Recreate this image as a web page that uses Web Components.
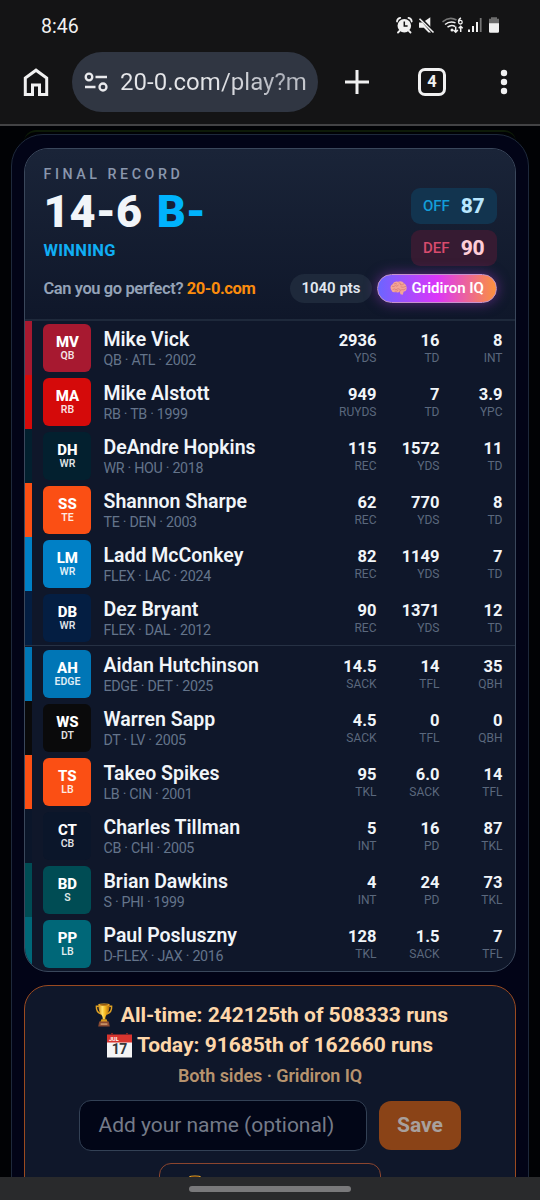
<!DOCTYPE html>
<html lang="en">
<head>
<meta charset="utf-8">
<title>20-0</title>
<style>
html,body{margin:0;padding:0;background:#010104;width:540px;height:1200px;overflow:hidden}
body{font-family:Roboto,"Liberation Sans",sans-serif;color:#f1f5f9}
</style>
</head>
<body>
<phone-screen></phone-screen>
<script>
const define = (name, render) => customElements.define(name, class extends HTMLElement {
  connectedCallback() {
    if (this.shadowRoot) return;
    const t = document.createElement('template');
    t.innerHTML = '<style>*{box-sizing:border-box}</style>' + render(this);
    this.attachShadow({mode: 'open'}).append(t.content.cloneNode(true));
  }
});

define('emoji-trophy', () => `
<style>:host{display:inline-block;width:18px;height:24px}svg{display:block;width:100%;height:100%}</style>
<svg viewBox="0 0 18 24"><defs><linearGradient id="g"><stop stop-color="#c98410"/><stop offset=".35" stop-color="#ffe168"/><stop offset=".6" stop-color="#f7b81d"/><stop offset="1" stop-color="#a9640b"/></linearGradient></defs>
<path d="M4 3.2H1.4Q1 9.3 6.3 11M14 3.2h2.6q.4 6.100-4.900 7.800" fill="none" stroke="#dfa123" stroke-width="1.500"/>
<path d="M3.300 1.500h11.400q-.2 7.500-3.200 10.400-1.200 1.100-1.300 4.600H7.800q-.1-3.500-1.300-4.600-3-2.900-3.200-10.400z" fill="url(#g)"/>
<ellipse cx="9" cy="1.700" rx="5.700" ry="1.200" fill="#e7ad32"/><ellipse cx="9" cy="1.800" rx="4.400" ry=".7" fill="#92560c"/>
<path d="M6.400 16.200h5.200l1 2.800H5.400z" fill="#d69920"/><path d="M4.200 18.600h9.600l1 5H3.200z" fill="#8a4b32"/><path d="M5.600 20.200h6.800v1.800H5.600z" fill="#c58f65"/></svg>`);

define('emoji-calendar', () => `
<style>:host{display:inline-block;width:25px;height:25px}svg{display:block}</style>
<svg width="25" height="25" viewBox="0 0 25 25"><path d="M0 8h25v16.500H0z" fill="#f4f4f5"/><path d="M0 1.500h4v-1h2v1h13v-1h2v1h4v8H0z" fill="#d8352f"/><path d="M4 0h2v2H4zM19 0h2v2h-2z" fill="#7f2525"/>
<text x="2" y="8" font-size="5.500" font-weight="700" fill="#fff">JUL</text><text x="12.300" y="21.300" text-anchor="middle" font-size="14" font-weight="700" fill="#35383b" letter-spacing="-.5">17</text></svg>`);

define('emoji-brain', () => `
<style>:host{display:inline-block;width:17px;height:15px}svg{display:block}</style>
<svg width="17" height="15" viewBox="0 0 17 15"><path d="M1 8.500Q-.5 5 2.500 3.300 4-.2 8 .7q4-1.200 6 1.600 3 1.500 2.600 5 .1 3-3 3.400l-.8 3-2.300-.5-.8-2.400q-2 1.300-3.500.2Q2 12 1 8.500z" fill="#f3a596"/>
<path d="M2.300 5.400q2 .8 3-.8 1.500 1.500 3-.3M4.500 2.700q2-.7 2.400.3M9 1.700q2 .3 1.600 2.200 2 .2 3.200-1M3 8.300q2-1 3 .4 2-2 4-.4M11 6q2 1 4.600-.5M9.500 10.700q0-2 2.500-2 2 .6 3.500-.8M5 10.300q2 .2 3-.8" fill="none" stroke="#d67874" stroke-width=".7" stroke-linecap="round"/></svg>`);

define('status-bar', () => `
<style>:host{display:flex;height:52px;align-items:center;justify-content:space-between;padding:0 40px 0 41px;font-size:19.500px;color:#f1f1f1}
svg{display:block}</style>
<span>8:46</span>
<svg width="104" height="18" viewBox="396 17 104 18" fill="#f1f1f1">
<circle cx="404.300" cy="25.700" r="6.800"/><path d="M397 21.500q.2-3 3.200-3.600M411.700 21.500q-.2-3-3.200-3.600M399.500 31l-1.500 1.500M409 31l1.500 1.500" stroke="#f1f1f1" stroke-width="1.800" fill="none" stroke-linecap="round"/><path d="M404.300 21.500v4.500h3.300" stroke="#141415" stroke-width="1.500" fill="none"/>
<path d="M419 22.400h3.300l8.700 10h-2.500l-4.700-4.600H419zM424.500 21.300l5.800-4v10.500z"/><path d="M420 17.800l14 14.500" stroke="#141415" stroke-width="2.800"/><path d="M419.500 18.800L433.500 32.500" stroke="#f1f1f1" stroke-width="1.600"/>
<g fill="none" stroke="#f1f1f1" stroke-width="1.500"><path d="M442.500 21.800q7-5.800 14-1.800" stroke="#777"/><path d="M445 24.500q5-4.200 10.500-1.600"/><path d="M447.500 27.200q4-3 7.500-.7"/><path d="M455.700 26.500v5.500m-2.200-2l2.200 2.200 2.200-2.200M460.700 32v-5.500m-2 1.800l2-2 2 2"/></g><circle cx="452" cy="30" r="1.500"/>
<path d="M461 18q-2.500 1-2.500 3.800" fill="none" stroke="#f1f1f1" stroke-width="1.400"/><circle cx="460.400" cy="22.200" r="1.800" fill="none" stroke="#f1f1f1" stroke-width="1.300"/>
<path d="M468 29.500h2V32h-2zM472 26h2v6h-2zM476 22h2v10h-2z"/><path d="M479.800 18h1.800v14h-1.800z" fill="#747474"/>
<path d="M491 17.300h6v1.500h2v5.200h-10v-5.200h2z" fill="#6d6d6d"/><path d="M489 23.300h10v8.200q0 1.300-1.300 1.300h-7.400q-1.300 0-1.300-1.300z"/></svg>`);

define('browser-toolbar', () => `
<style>:host{display:flex;height:72px;align-items:flex-start}svg{display:block;flex:none}
.url{width:246px;height:60px;border-radius:30px;background:#303642;display:flex;align-items:center;padding-left:12px;overflow:hidden}
.url span{font-size:24px;margin-left:12px;white-space:nowrap;letter-spacing:.02px;background:linear-gradient(90deg,#e4e5e8 96px,#aeb2bb 165px,#c9cbd0);-webkit-background-clip:text;background-clip:text;color:transparent}
.tab{margin:16px 0 0 48px;width:28px;height:28px;border:3px solid #f1f1f1;border-radius:7px;font-size:16.500px;font-weight:700;line-height:22px;text-align:center;color:#f1f1f1}</style>
<svg width="72" height="60" viewBox="0 0 72 60" fill="none" stroke="#f1f1f1" stroke-width="3"><path d="M25.300 42.500V26L36 18.200 46.700 26v16.500h-7.200V33h-7v9.500z"/></svg>
<div class="url"><svg width="24" height="20" viewBox="0 0 24 20" fill="none" stroke="#e9eaed" stroke-width="2.300"><circle cx="5" cy="5" r="3.300"/><path d="M11.500 5H23M1 15h10.500"/><circle cx="19" cy="15" r="3.500"/></svg><span>20-0.com/play?m</span></div>
<svg width="66" height="60" viewBox="318 52 66 60" stroke="#f1f1f1" stroke-width="3"><path d="M345 82h24M357 70v24"/></svg>
<div class="tab" style="margin-left:34px">4</div>
<svg width="80" height="60" viewBox="446 52 80 60" fill="#f1f1f1"><circle cx="504" cy="73" r="3.200"/><circle cx="504" cy="82" r="3.200"/><circle cx="504" cy="91" r="3.200"/></svg>`);

define('rating-box', el => `
<style>:host{display:flex;width:86px;height:36px;border-radius:9px;align-items:center;justify-content:space-between;padding:0 12.500px 0 12px;background:var(--bg)}
span{font-size:15px;font-weight:500;color:var(--label);letter-spacing:0}b{font-size:21px;font-weight:800;color:var(--value);letter-spacing:-.2px}</style>
<span>${el.getAttribute('label')}</span><b><slot></slot></b>`);

define('record-header', () => `
<style>:host{display:flex;flex-direction:column;height:172px;padding:14px 18px 0 18.500px;background:linear-gradient(#1a2438,#0f172a);border-bottom:2px solid #1e293b}
.top{display:flex;justify-content:space-between;height:110px}
.label{font-size:14.250px;font-weight:500;letter-spacing:3.550px;line-height:23px;color:#8a97ad;white-space:nowrap}
.score{font-size:45px;font-weight:900;line-height:52px;color:#f1f5f9;white-space:nowrap}.score i{font-style:normal;color:#00b3fc;margin-left:3.500px}
.win{font-size:16.500px;font-weight:700;line-height:26px;color:#10aef4;letter-spacing:.3px}
.ratings{display:flex;flex-direction:column;gap:6px;padding-top:25px}
.foot{display:flex;align-items:center;height:30px;white-space:nowrap}
.ask{font-size:16.500px;font-weight:600;color:#94a3b8;flex:1;letter-spacing:-.42px}.ask b{font-weight:700;color:#fb8c0c}
.pill{display:flex;align-items:center;height:29px;border-radius:15px;font-size:15px;font-weight:600}
.pts{width:82px;justify-content:center;background:#1e293b;color:#e2e8f0;margin-right:5px}
.iq{width:120px;justify-content:center;gap:4.500px;background:linear-gradient(90deg,#6b65ff,#dc35fa 50%,#fb923c);border:1px solid #c792cc;box-shadow:0 0 13px #a83bd480;color:#fff}</style>
<div class="top"><div><div class="label">FINAL RECORD</div><div class="score">14-6 <i>B-</i></div><div class="win">WINNING</div></div>
<div class="ratings"><rating-box label="OFF" style="--bg:#12344f;--label:#139dd8;--value:#b8e6fe">87</rating-box><rating-box label="DEF" style="--bg:#361b32;--label:#d84b6d;--value:#fecdd7">90</rating-box></div></div>
<div class="foot"><div class="ask">Can you go perfect? <b>20-0.com</b></div><div class="pill pts">1040 pts</div><div class="pill iq"><emoji-brain></emoji-brain><span>Gridiron IQ</span></div></div>`);

define('stat-cell', el => `
<style>:host{display:flex;flex-direction:column;width:63px;text-align:right}
b{font-size:16.500px;font-weight:700;line-height:18px;color:#f1f5f9}span{font-size:12px;line-height:16px;color:#5b687d}</style>
<b>${el.getAttribute('value')}</b><span>${el.getAttribute('label')}</span>`);

define('player-row', el => {
  const [name, ini, pos, meta, color, ...s] = el.getAttribute('data').split('|');
  return `
<style>:host{display:flex;height:54px;align-items:center;padding-right:12.500px;border-left:7px solid ${color}}
.badge{width:48px;height:48px;border-radius:6px;margin-left:11.400px;background:${color};display:flex;flex-direction:column;align-items:center;padding-top:10px;flex:none}
.badge b{font-size:15px;font-weight:800;line-height:16px;color:#fff}.badge span{font-size:10.500px;font-weight:600;line-height:11px;color:#ffffffe0}
.who{flex:1;margin-left:12.100px;white-space:nowrap}.who div{font-size:19.500px;font-weight:600;line-height:22px;color:#f1f5f9}.who span{display:block;font-size:14.250px;letter-spacing:-.3px;line-height:18px;color:#64748b}
.stats{display:flex}.who{padding-top:1px}.stats{padding-top:1px}</style>
<div class="badge"><b>${ini}</b><span>${pos}</span></div><div class="who"><div>${name}</div><span>${meta}</span></div>
<div class="stats">${[0, 2, 4].map(i => `<stat-cell value="${s[i]}" label="${s[i + 1]}"></stat-cell>`).join('')}</div>`;
});

const offense = [
 'Mike Vick|MV|QB|QB · ATL · 2002|#a71930|2936|YDS|16|TD|8|INT',
 'Mike Alstott|MA|RB|RB · TB · 1999|#d50a0a|949|RUYDS|7|TD|3.9|YPC',
 'DeAndre Hopkins|DH|WR|WR · HOU · 2018|#03202f|115|REC|1572|YDS|11|TD',
 'Shannon Sharpe|SS|TE|TE · DEN · 2003|#fb4f14|62|REC|770|YDS|8|TD',
 'Ladd McConkey|LM|WR|FLEX · LAC · 2024|#0080c6|82|REC|1149|YDS|7|TD',
 'Dez Bryant|DB|WR|FLEX · DAL · 2012|#041e42|90|REC|1371|YDS|12|TD'];
const defense = [
 'Aidan Hutchinson|AH|EDGE|EDGE · DET · 2025|#0076b6|14.5|SACK|14|TFL|35|QBH',
 'Warren Sapp|WS|DT|DT · LV · 2005|#0a0a0b|4.5|SACK|0|TFL|0|QBH',
 'Takeo Spikes|TS|LB|LB · CIN · 2001|#fb4f14|95|TKL|6.0|SACK|14|TFL',
 'Charles Tillman|CT|CB|CB · CHI · 2005|#0b162a|5|INT|16|PD|87|TKL',
 'Brian Dawkins|BD|S|S · PHI · 1999|#004c54|4|INT|24|PD|73|TKL',
 'Paul Posluszny|PP|LB|D-FLEX · JAX · 2016|#006778|128|TKL|1.5|SACK|7|TFL'];
const rows = list => list.map(r => `<player-row data="${r}"></player-row>`).join('');

define('record-card', () => `
<style>:host{display:block;height:824px;border:1px solid #3a475b;border-radius:24px;overflow:hidden;background:#0f172a}
.def{border-top:1px solid #263144;padding-top:1px}</style>
<record-header></record-header><div>${rows(offense)}</div><div class="def">${rows(defense)}</div>`);

define('rank-card', () => `
<style>:host{display:flex;flex-direction:column;align-items:center;height:260px;margin-top:13px;border:1px solid #9a4a20;border-radius:24px;background:#0f172a;padding-top:14px}
.line{display:flex;align-items:center;height:30px;font-size:21px;font-weight:700;color:#fed7aa;white-space:nowrap}
.sub{font-size:18px;font-weight:600;line-height:32px;color:#b7936e;letter-spacing:-.08px}
.form{display:flex;align-items:center;margin-top:8px;gap:12px}
.input{width:288px;height:51px;border:1px solid #334155;border-radius:12px;background:#020617;padding-left:18.500px;line-height:49px;font-size:21px;color:#757b89;letter-spacing:-.03px}
.save{width:82px;height:49px;border-radius:12px;background:#8a4317;color:#a8a09d;font-size:21px;font-weight:700;line-height:49px;text-align:center}
.more{width:222px;height:51px;margin-top:12px;border:1px solid #8b452e;border-radius:12px;padding:11px 0 0 26px}</style>
<div class="line"><emoji-trophy style="margin:0 8px 0 3px"></emoji-trophy><span>All-time: 242125th of 508333 runs</span></div>
<div class="line"><emoji-calendar style="margin-right:5px"></emoji-calendar><span>Today: 91685th of 162660 runs</span></div>
<div class="sub">Both sides · Gridiron IQ</div>
<div class="form"><div class="input">Add your name (optional)</div><div class="save">Save</div></div>
<div class="more"><emoji-trophy></emoji-trophy></div>`);

define('result-sheet', () => `
<style>:host{display:block;margin:3px 11px 0 11px;height:1060px;border:1px solid #1e293b;border-radius:32px 32px 0 0;background:#020417;padding:13px 12px}</style>
<slot></slot>`);

define('phone-screen', () => `
<style>:host{display:flex;flex-direction:column;width:540px;height:1200px;overflow:hidden;background:#010205}
.chrome{height:126px;flex:none;background:#141415;border-bottom:2px solid #434345}
.page{height:1051px;flex:none;overflow:hidden;padding-top:4px}
.edge{height:12px;margin:0 24px;border-top:2px solid #0d1a08;border-radius:24px 24px 0 0;margin-bottom:-11px}
.nav{flex:1;background:#292a2c;display:flex;justify-content:center}.nav i{width:162px;height:6px;margin-top:9px;border-radius:3px;background:#79797b}</style>
<div class="chrome"><status-bar></status-bar><browser-toolbar></browser-toolbar></div>
<div class="page"><div class="edge"></div><result-sheet><record-card></record-card><rank-card></rank-card></result-sheet></div>
<div class="nav"><i></i></div>`);
</script>
</body>
</html>
